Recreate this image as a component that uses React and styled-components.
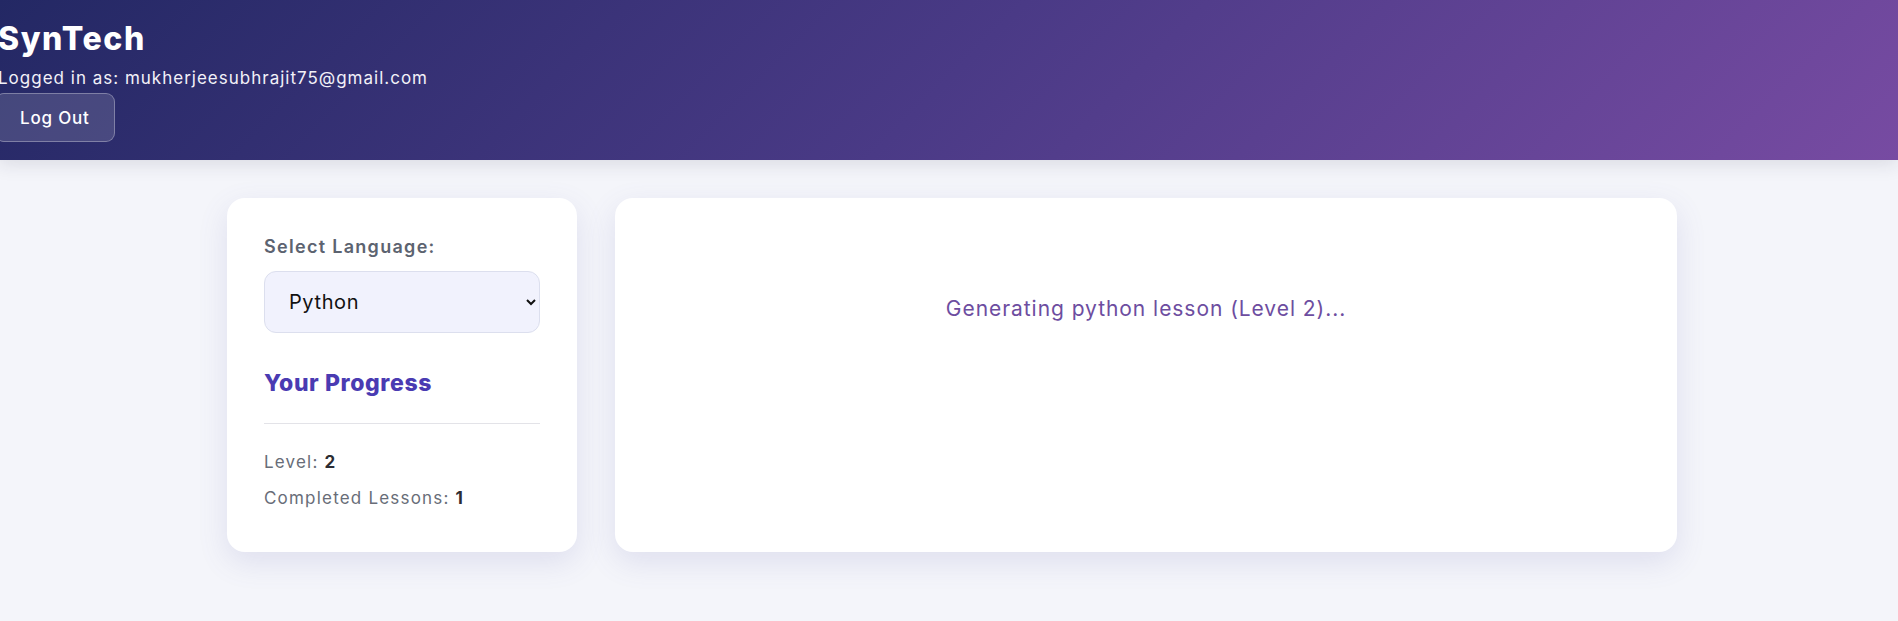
import React, { useState } from "react";
import styled, { createGlobalStyle } from "styled-components";

const GlobalStyle = createGlobalStyle`
  * { box-sizing: border-box; }
  body {
    margin: 0;
    background: #f4f5fa;
    font-family: "Inter", "Open Sans", sans-serif;
  }
`;

const Header = styled.header`
  height: 160px;
  background: linear-gradient(135deg, #232864 0%, #4a3a86 50%, #774ba2 100%);
  box-shadow: 0 4px 18px rgba(30, 30, 60, 0.12);
  color: #fff;
  display: flex;
  flex-direction: column;
  align-items: flex-start;
  padding: 18px 0 0;
  margin-left: -2px;
`;

const Brand = styled.h1`
  margin: 0;
  font-size: 32px;
  font-weight: 800;
  letter-spacing: 1.6px;
  line-height: 42px;
`;

const UserLine = styled.p`
  margin: 7px 0 0;
  font-size: 17px;
  line-height: 22px;
  letter-spacing: 1px;
  color: #f2f1f8;
`;

const LogOutButton = styled.button`
  margin-top: 4px;
  height: 49px;
  padding: 0 24px;
  margin-left: -3px;
  border-radius: 9px;
  border: 1px solid rgba(255, 255, 255, 0.3);
  background: rgba(255, 255, 255, 0.14);
  color: #fff;
  font-family: inherit;
  font-size: 17px;
  font-weight: 500;
  letter-spacing: 0.8px;
  cursor: pointer;
`;

const Main = styled.main`
  display: grid;
  grid-template-columns: 350px 1062px;
  grid-auto-rows: 354px;
  gap: 38px;
  justify-content: center;
  padding: 38px 0 60px;
  margin-left: 6px;
`;

const Card = styled.section`
  background: #fff;
  border-radius: 18px;
  box-shadow: 0 10px 30px rgba(90, 95, 170, 0.14);
`;

const Sidebar = styled(Card)`
  padding: 38px 37px;
`;

const Label = styled.label`
  display: block;
  font-size: 18px;
  font-weight: 600;
  color: #5c6370;
  line-height: 22px;
  letter-spacing: 1.3px;
`;

const Select = styled.select`
  display: block;
  width: 100%;
  height: 62px;
  margin-top: 13px;
  padding: 0 10px 0 20px;
  border-radius: 12px;
  border: 1px solid #dcdfee;
  background: #f1f2fd;
  font-family: inherit;
  font-size: 20px;
  letter-spacing: 0.6px;
  color: #111;
`;

const ProgressTitle = styled.h3`
  margin: 35px 0 0;
  font-size: 23px;
  font-weight: 800;
  color: #4a3bb2;
  line-height: 30px;
  letter-spacing: 0.6px;
`;

const Divider = styled.hr`
  margin: 25px 0 27px;
  border: 0;
  border-top: 1px solid #e3e3e8;
`;

const Stat = styled.p`
  margin: 0 0 14px;
  font-size: 17px;
  line-height: 22px;
  color: #686d78;
  letter-spacing: 1.2px;
  strong {
    color: #2c2c33;
    font-weight: 700;
  }
`;

const Content = styled(Card)`
  padding: 38px;
`;

const Loading = styled.div`
  text-align: center;
  padding-top: 60px;
  font-size: 21px;
  color: #6d4da0;
  letter-spacing: 0.95px;
`;

export default function App() {
  const [lang, setLang] = useState("python");
  return (
    <>
      <GlobalStyle />
      <Header>
        <Brand>SynTech</Brand>
        <UserLine>Logged in as: mukherjeesubhrajit75@gmail.com</UserLine>
        <LogOutButton>Log Out</LogOutButton>
      </Header>
      <Main>
        <Sidebar>
          <Label htmlFor="lang">Select Language:</Label>
          <Select id="lang" value={lang} onChange={(e) => setLang(e.target.value)}>
            <option value="python">Python</option>
            <option value="javascript">JavaScript</option>
            <option value="java">Java</option>
          </Select>
          <ProgressTitle>Your Progress</ProgressTitle>
          <Divider />
          <Stat>
            Level: <strong>2</strong>
          </Stat>
          <Stat>
            Completed Lessons: <strong>1</strong>
          </Stat>
        </Sidebar>
        <Content>
          <Loading>Generating {lang} lesson (Level 2)...</Loading>
        </Content>
      </Main>
    </>
  );
}
